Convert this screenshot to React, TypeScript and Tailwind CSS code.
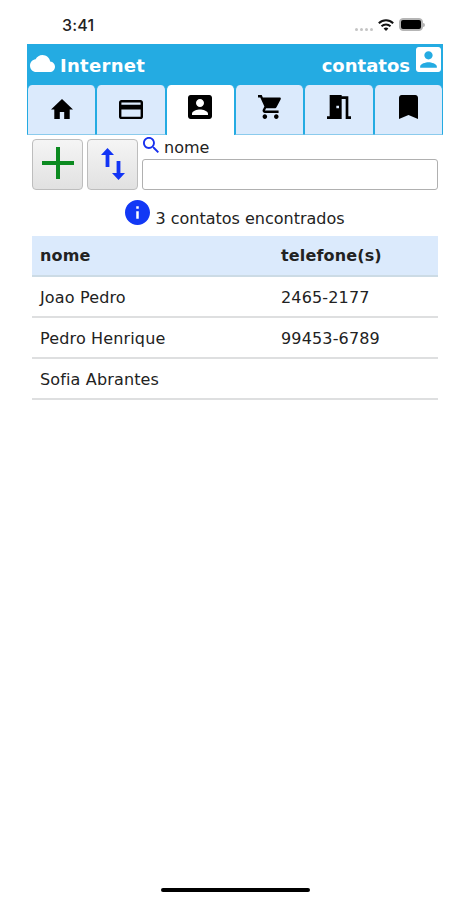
import type { ReactNode } from 'react'
import clsx from 'clsx'

type IconProps = {
  className: string
  viewBox: string
  children: ReactNode
}

// icons are cropped to their drawing, so the class sets the visible size
const Icon = ({ className, viewBox, children }: IconProps) => (
  <svg
    className={clsx('block shrink-0 fill-current', className)}
    viewBox={viewBox}
    preserveAspectRatio="none"
  >
    {children}
  </svg>
)

const accountPath = 'M3 5v14c0 1.1.89 2 2 2h14c1.1 0 2-.9 2-2V5c0-1.1-.9-2-2-2H5c-1.11 0-2 .9-2 2zm12 4c0 1.66-1.34 3-3 3s-3-1.34-3-3 1.34-3 3-3 3 1.34 3 3zm-9 8c0-2 4-3.1 6-3.1s6 1.1 6 3.1v1H6v-1z'

const tabs = [
  {
    name: 'home',
    size: 'w-[22px] h-5 mt-[14px]',
    viewBox: '2 3 20 17',
    path: 'M10 20v-6h4v6h5v-8h3L12 3 2 12h3v8z',
  },
  {
    name: 'cards',
    size: 'w-6 h-[19px] mt-[14.500px]',
    viewBox: '2 4 20 16',
    path: 'M20 4H4c-1.11 0-1.99.89-1.99 2L2 18c0 1.11.89 2 2 2h16c1.11 0 2-.89 2-2V6c0-1.11-.89-2-2-2zm0 14H4v-6h16v6zm0-10H4V6h16v2z',
  },
  {
    name: 'contacts',
    size: 'w-6 h-6 mt-[10px]',
    viewBox: '3 3 18 18',
    path: accountPath,
  },
  {
    name: 'cart',
    size: 'w-6 h-6 mt-[10px]',
    viewBox: '1 2 21 20',
    path: 'M7 18c-1.1 0-1.99.9-1.99 2S5.9 22 7 22s2-.9 2-2-.9-2-2-2zM1 2v2h2l3.6 7.59-1.35 2.45c-.16.28-.25.61-.25.96 0 1.1.9 2 2 2h12v-2H7.42c-.14 0-.25-.11-.25-.25l.03-.12.9-1.63h7.45c.75 0 1.41-.41 1.75-1.03l3.58-6.49c.08-.14.12-.31.12-.48 0-.55-.45-1-1-1H5.21l-.94-2H1zm16 16c-1.1 0-1.99.9-1.99 2s.89 2 1.99 2 2-.9 2-2-.9-2-2-2z',
  },
  {
    name: 'room',
    size: 'w-6 h-6 mt-[10px]',
    viewBox: '3 3 18 18',
    path: 'M14 6v15H3v-2h2V3h9v1h5v15h2v2h-4V6h-3zm-4 5v2h2v-2h-2z',
  },
  {
    name: 'bookmark',
    size: 'w-[19px] h-6 mt-[10px]',
    viewBox: '5 3 14 18',
    path: 'M17 3H7c-1.1 0-1.99.9-1.99 2L5 21l7-3 7 3V5c0-1.1-.9-2-2-2z',
  },
]

const contacts = [
  { name: 'Joao Pedro', phone: '2465-2177' },
  { name: 'Pedro Henrique', phone: '99453-6789' },
  { name: 'Sofia Abrantes', phone: '' },
]

const StatusBar = () => (
  <div className="flex h-11 items-start justify-between pl-[62px] pr-[44px]">
    <span className="mt-[15px] font-['Inter'] text-[16px] leading-[21px] font-medium tracking-[0.2px] text-[#222]">3:41</span>
    <div className="mt-[18px] flex items-center">
      <div className="mt-[9px] mr-[5px] flex gap-[2px]">
        {[0, 1, 2, 3].map((dot) => (
          <span key={dot} className="size-[3px] rounded-full bg-[#c4c4c4]" />
        ))}
      </div>
      <svg className="mr-[5px] h-3 w-4" viewBox="0 0 16 12" fill="none" stroke="#111" strokeWidth="2">
        <path d="M.8 4.2C5 .2 11 .2 15.2 4.2M3.5 7.2C6 4.8 10 4.8 12.5 7.2" />
        <path d="M5.6 9.5C7 8.2 9 8.2 10.4 9.5L8 12z" fill="#111" stroke="none" />
      </svg>
      <span className="flex h-[13px] w-6 rounded-[4px] border border-[#b5b5b5] bg-[#b5b5b5] p-px">
        <span className="flex-1 rounded-[2px] bg-black" />
      </span>
      <span className="h-1 w-[2px] rounded-r bg-[#b5b5b5]" />
    </div>
  </div>
)

const App = () => {
  return (
    <main className="flex h-[900px] w-[469px] flex-col bg-white font-['DejaVu_Sans',sans-serif] text-[16px] text-[#222]">
      <StatusBar />
      <div className="mr-[26px] ml-[27px]">
        <header className="flex h-[41px] justify-between bg-[#24abe2] pr-[2px] pl-[3px] text-[18px] font-bold text-white">
          <div className="flex">
            <Icon className="mt-[11px] mr-[5px] h-[17px] w-[25px]" viewBox="0 4 24 16">
              <path d="M19.35 10.04C18.67 6.59 15.64 4 12 4 9.11 4 6.6 5.64 5.35 8.04 2.34 8.36 0 10.91 0 14c0 3.31 2.69 6 6 6h13c2.76 0 5-2.24 5-5 0-2.64-2.05-4.78-4.65-4.96z" />
            </Icon>
            <span className="mt-[10px] leading-6 tracking-[0.3px]">Internet</span>
          </div>
          <div className="flex">
            <span className="mt-[10px] leading-6">contatos</span>
            <Icon className="mt-[3px] ml-[6px] h-[25px] w-[25px]" viewBox="3 3 18 18">
              <path d={accountPath} />
            </Icon>
          </div>
        </header>

        <nav className="grid h-[50px] grid-cols-6 bg-[#24abe2]">
          {tabs.map((tab) => (
            <div
              key={tab.name}
              className={clsx(
                'flex justify-center rounded-t-[5px] border-x',
                tab.name === 'contacts'
                  ? 'border-[#24abe2] bg-white'
                  : 'border-x-[#24abe2] border-b border-b-[#8bcbed] bg-[#dbeafc]',
              )}
            >
              <Icon className={clsx('text-black', tab.size)} viewBox={tab.viewBox}>
                <path d={tab.path} />
              </Icon>
            </div>
          ))}
        </nav>

        <div className="mr-[5px] ml-[5px]">
          <section className="mt-1 flex h-[51px] gap-1">
            <button className="flex w-[51px] items-center justify-center rounded-[4px] border border-[#bdbdbd] bg-linear-to-b from-[#f5f5f5] to-[#e1e1e1]">
              <Icon className="-mt-[3px] size-8 text-[#0b8a20]" viewBox="0 0 32 32">
                <path d="M14 0h4v14h14v4H18v14h-4V18H0v-4h14z" />
              </Icon>
            </button>
            <button className="flex w-[51px] items-center justify-center rounded-[4px] border border-[#bdbdbd] bg-linear-to-b from-[#f5f5f5] to-[#e1e1e1]">
              <Icon className="-mt-[2px] h-8 w-6 text-[#1234f5]" viewBox="0 0 24 32">
                <path d="M6.5 0L13 7H8.4v12H4.6V7H0zM17.5 32L11 25h4.6V13h3.8v12H24z" />
              </Icon>
            </button>
            <div className="flex flex-1 flex-col">
              <label className="flex h-5">
                <Icon className="-mt-[2px] ml-px mr-[5px] size-4 text-[#1830ee]" viewBox="3 3 17.49 17.49">
                  <path d="M15.5 14h-.79l-.28-.27C15.41 12.59 16 11.11 16 9.5 16 5.91 13.09 3 9.5 3S3 5.91 3 9.5 5.91 16 9.5 16c1.61 0 3.09-.59 4.23-1.57l.27.28v.79l5 4.99L20.49 19l-4.99-5zm-6 0C7.01 14 5 11.99 5 9.5S7.01 5 9.5 5 14 7.01 14 9.5 11.99 14 9.5 14z" />
                </Icon>
                <span className="-mt-px leading-5">nome</span>
              </label>
              <input className="h-[31px] w-full rounded-[3px] border border-[#b0b0b0] bg-white" />
            </div>
          </section>

          <p className="flex h-[46px] justify-center pt-[10px]">
            <Icon className="mr-[5px] size-[25px] text-[#1238f5]" viewBox="2 2 20 20">
              <path d="M12 2C6.48 2 2 6.48 2 12s4.48 10 10 10 10-4.48 10-10S17.52 2 12 2zm1 15h-2v-6h2v6zm0-8h-2V7h2v2z" />
            </Icon>
            <span className="mt-[9px] leading-5">3 contatos encontrados</span>
          </p>

          <table className="w-full table-fixed border-collapse text-left tracking-[0.15px]">
            <thead>
              <tr className="h-10 border-b-2 border-[#ccdbe5] bg-[#dbeafc]">
                <th className="w-[241px] p-0 pt-px pl-2">nome</th>
                <th className="p-0 pt-px pl-2">telefone(s)</th>
              </tr>
            </thead>
            <tbody>
              {contacts.map((contact) => (
                <tr key={contact.name} className="h-[41px] border-b-2 border-[#dedfe0]">
                  <td className="p-0 pt-[2px] pl-2">{contact.name}</td>
                  <td className="p-0 pt-[2px] pl-2">{contact.phone}</td>
                </tr>
              ))}
            </tbody>
          </table>
        </div>
      </div>
      <div className="mt-auto mb-2 ml-[161px] h-[4px] w-[149px] rounded-full bg-black" />
    </main>
  )
}
export default App
